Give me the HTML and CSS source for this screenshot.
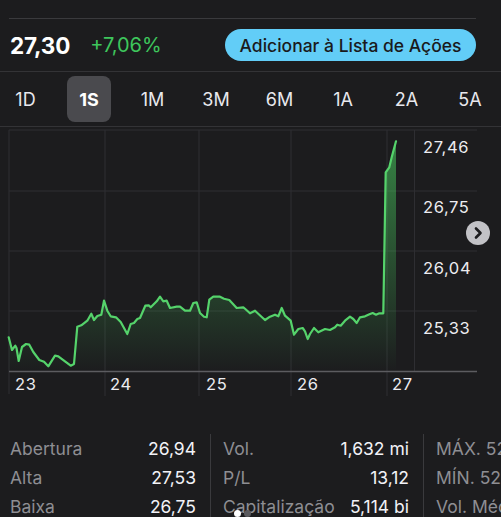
FILE: index.html
```html
<!DOCTYPE html>
<html lang="pt">
<head>
<meta charset="utf-8">
<link rel="stylesheet" href="styles.css">
</head>
<body>
<div class="page">
  <div class="topline"></div>
  <div class="quote">
    <span class="price">27,30</span>
    <span class="change">+7,06%</span>
    <button class="add-btn">Adicionar à Lista de Ações</button>
  </div>
  <div class="periods">
    <span class="period">1D</span>
    <span class="period active">1S</span>
    <span class="period">1M</span>
    <span class="period">3M</span>
    <span class="period">6M</span>
    <span class="period">1A</span>
    <span class="period">2A</span>
    <span class="period">5A</span>
  </div>
  <div class="chart">
    <svg class="chart-svg" width="501" height="272" viewBox="0 128 501 272">
      <defs>
        <linearGradient id="fillg" gradientUnits="userSpaceOnUse" x1="0" y1="140" x2="0" y2="373">
          <stop offset="0" stop-color="#4cd964" stop-opacity="0.55"/>
          <stop offset="1" stop-color="#4cd964" stop-opacity="0"/>
        </linearGradient>
      </defs>
      <g class="grid">
        <line x1="9" y1="131" x2="477" y2="131"/>
        <line x1="9" y1="192" x2="477" y2="192"/>
        <line x1="9" y1="252" x2="477" y2="252"/>
        <line x1="9" y1="312" x2="477" y2="312"/>
        <line x1="9" y1="131" x2="9" y2="395"/>
        <line x1="105" y1="131" x2="105" y2="397"/>
        <line x1="199" y1="131" x2="199" y2="397"/>
        <line x1="291" y1="131" x2="291" y2="397"/>
        <line x1="387" y1="131" x2="387" y2="397"/>
        <line x1="414.5" y1="131" x2="414.5" y2="372"/>
      </g>
      <path class="area" d="M8.7,338.3 L12,351 L15.3,346.7 L16.5,349 L18.7,362 L22,348 L26,345 L29.3,345.7 L33.3,353 L39.3,361 L44,362.7 L48.3,367.3 L55,356.7 L58.3,357.3 L70.7,366.7 L74,365 L77.3,327.7 L81.3,326.3 L87.3,321.7 L91.3,314.7 L94,321 L97.3,317 L101.3,315.7 L104,301.7 L107.3,311.7 L110.7,317.3 L116,318.3 L120.7,323 L127.3,335 L130.7,325 L134,324 L137.3,320 L140,319 L145.3,306.7 L148.7,306.3 L150.7,308.3 L156.7,302.3 L160,297.7 L163.3,302.3 L166.7,301.7 L170,309 L176.7,307.7 L180,307.7 L185,311.7 L190,311.7 L193.3,304 L196.7,303.3 L200,314 L204,317.7 L206.7,318.3 L209.3,300.7 L213.3,297.7 L220,297.7 L224,299.7 L229.3,301 L236.7,309 L243.3,308.3 L245.3,310 L250,314.3 L255,311.7 L265,321 L270,317.7 L275,315.7 L278.3,317.3 L281.7,309 L285,316.7 L290.7,321.7 L294,335.7 L298.3,330 L302.7,329 L305,332.3 L307.7,340 L310,335 L314,329 L318.3,333.3 L325,330 L330,331 L335,328.3 L337.3,325.7 L340.7,326.7 L345,321.7 L350,317.7 L353.3,320 L356.7,324 L360,318.3 L365,317.3 L370,315 L372.7,314 L376,315.7 L379.3,314.3 L383.3,314.3 L385.7,173.3 L389.3,168.3 L391.7,158.3 L396,142.3 L396,372 L8.7,372 Z"/>
      <line class="axis" x1="9" y1="372.5" x2="477" y2="372.5"/>
      <path class="line" d="M8.7,338.3 L12,351 L15.3,346.7 L16.5,349 L18.7,362 L22,348 L26,345 L29.3,345.7 L33.3,353 L39.3,361 L44,362.7 L48.3,367.3 L55,356.7 L58.3,357.3 L70.7,366.7 L74,365 L77.3,327.7 L81.3,326.3 L87.3,321.7 L91.3,314.7 L94,321 L97.3,317 L101.3,315.7 L104,301.7 L107.3,311.7 L110.7,317.3 L116,318.3 L120.7,323 L127.3,335 L130.7,325 L134,324 L137.3,320 L140,319 L145.3,306.7 L148.7,306.3 L150.7,308.3 L156.7,302.3 L160,297.7 L163.3,302.3 L166.7,301.7 L170,309 L176.7,307.7 L180,307.7 L185,311.7 L190,311.7 L193.3,304 L196.7,303.3 L200,314 L204,317.7 L206.7,318.3 L209.3,300.7 L213.3,297.7 L220,297.7 L224,299.7 L229.3,301 L236.7,309 L243.3,308.3 L245.3,310 L250,314.3 L255,311.7 L265,321 L270,317.7 L275,315.7 L278.3,317.3 L281.7,309 L285,316.7 L290.7,321.7 L294,335.7 L298.3,330 L302.7,329 L305,332.3 L307.7,340 L310,335 L314,329 L318.3,333.3 L325,330 L330,331 L335,328.3 L337.3,325.7 L340.7,326.7 L345,321.7 L350,317.7 L353.3,320 L356.7,324 L360,318.3 L365,317.3 L370,315 L372.7,314 L376,315.7 L379.3,314.3 L383.3,314.3 L385.7,173.3 L389.3,168.3 L391.7,158.3 L396,142.3"/>
      <g class="ylab">
        <text x="423" y="154">27,46</text>
        <text x="423" y="214">26,75</text>
        <text x="423" y="275">26,04</text>
        <text x="423" y="335">25,33</text>
      </g>
      <g class="xlab">
        <text x="15" y="391">23</text>
        <text x="110" y="391">24</text>
        <text x="206" y="391">25</text>
        <text x="297" y="391">26</text>
        <text x="392" y="391">27</text>
      </g>
    </svg>
    <span class="next-btn">
      <svg width="24" height="24" viewBox="0 0 24 24"><path d="M10 7.5 L14.5 12 L10 16.5" fill="none" stroke="#1c1c1e" stroke-width="2.6" stroke-linecap="round" stroke-linejoin="round"/></svg>
    </span>
  </div>
  <div class="stats">
    <div class="stat-col">
      <div class="stat-row"><span class="k">Abertura</span><span class="v">26,94</span></div>
      <div class="stat-row"><span class="k">Alta</span><span class="v">27,53</span></div>
      <div class="stat-row"><span class="k">Baixa</span><span class="v">26,75</span></div>
    </div>
    <div class="stat-col">
      <div class="stat-row"><span class="k">Vol.</span><span class="v">1,632 mi</span></div>
      <div class="stat-row"><span class="k">P/L</span><span class="v">13,12</span></div>
      <div class="stat-row"><span class="k">Capitalização</span><span class="v">5,114 bi</span></div>
    </div>
    <div class="stat-col">
      <div class="stat-row"><span class="k">MÁX. 52 SEM.</span><span class="v">27,53</span></div>
      <div class="stat-row"><span class="k">MÍN. 52 SEM.</span><span class="v">18,20</span></div>
      <div class="stat-row"><span class="k">Vol. Médio</span><span class="v">1,2 mi</span></div>
    </div>
  </div>
  <div class="dots"><span class="dot on"></span><span class="dot"></span></div>
</div>
</body>
</html>
```
FILE: styles.css
```css
html, body {
  margin: 0;
  padding: 0;
  background: #1c1c1e;
  overflow: hidden;
}
.page {
  position: relative;
  width: 501px;
  height: 517px;
  overflow: hidden;
  font-family: Inter, "Noto Sans", "Liberation Sans", sans-serif;
  color: #f2f2f7;
}
.topline {
  height: 18px;
  margin: 0 25px 0 9px;
  border-bottom: 1.5px solid #3a3a3d;
}
.quote {
  display: flex;
  align-items: center;
  height: 52px;
  padding: 0 25px 0 10px;
  border-bottom: 1px solid #333336;
}
.price {
  font-size: 22.5px;
  font-weight: 700;
  color: #ffffff;
  letter-spacing: -0.2px;
}
.change {
  margin-left: 20px;
  font-size: 20px;
  color: #3ec65c;
}
.add-btn {
  margin-left: auto;
  width: 251px;
  height: 32px;
  border: none;
  border-radius: 16px;
  background: #62cdf7;
  color: #1a1a1c;
  font-family: Inter, "Noto Sans", "Liberation Sans", sans-serif;
  font-size: 17.5px;
  font-weight: 500;
  padding: 0;
}
.periods {
  display: grid;
  grid-template-columns: repeat(8, 44px);
  column-gap: 19.5px;
  align-items: center;
  height: 54px;
  padding-left: 3.5px;
  border-bottom: 1px solid #333336;
}
.period {
  height: 46px;
  display: flex;
  align-items: center;
  justify-content: center;
  font-size: 18px;
  color: #e8e8ed;
  border-radius: 8px;
}
.period.active {
  background: #4a4a4e;
  font-weight: 700;
  color: #ffffff;
}
.chart {
  position: relative;
  height: 307px;
}
.chart-svg {
  display: block;
}
.grid line {
  stroke: #2e2e32;
  stroke-width: 1;
}
.axis {
  stroke: #5c5c60;
  stroke-width: 1.5;
}
.area {
  fill: url(#fillg);
}
.line {
  fill: none;
  stroke: #55d36b;
  stroke-width: 2.2;
  stroke-linejoin: round;
  stroke-linecap: round;
}
.ylab text, .xlab text {
  font-family: Inter, "Noto Sans", "Liberation Sans", sans-serif;
  font-size: 16.5px;
  fill: #ececf0;
  letter-spacing: 0.6px;
}
.next-btn {
  position: absolute;
  left: 466px;
  top: 94px;
  width: 24px;
  height: 24px;
  border-radius: 50%;
  background: #c2c2c6;
  display: flex;
}
.stats {
  display: flex;
  padding-left: 10px;
}
.stat-col {
  width: 186px;
  flex: none;
}
.stat-col + .stat-col {
  margin-left: 14px;
  padding-left: 12px;
  border-left: 1px solid #3a3a3d;
}
.stat-row {
  display: flex;
  justify-content: space-between;
  height: 29px;
  line-height: 29px;
  font-size: 17.5px;
  white-space: nowrap;
}
.k {
  color: #8e8e93;
}
.v {
  color: #f2f2f7;
}
.dots {
  position: absolute;
  left: 234px;
  top: 510px;
  display: flex;
  gap: 3px;
}
.dot {
  width: 7px;
  height: 7px;
  border-radius: 50%;
  background: #5a5a5e;
}
.dot.on {
  background: #ffffff;
}
```
